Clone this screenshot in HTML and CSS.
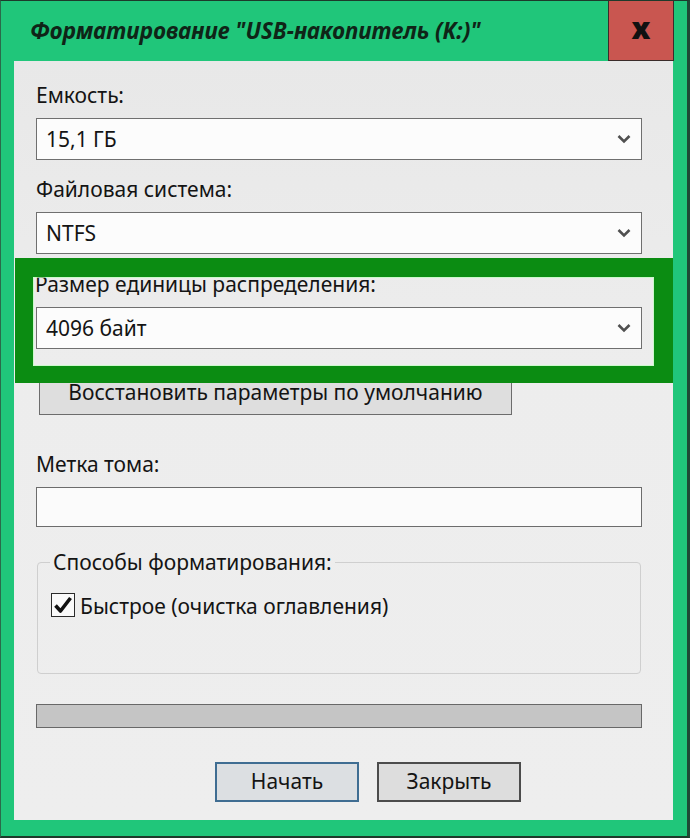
FILE: index.html
```html
<!DOCTYPE html>
<html lang="ru">
<head>
<meta charset="utf-8">
<title>Форматирование</title>
<link rel="stylesheet" href="styles.css">
</head>
<body>
<div class="window">
  <div class="titlebar">
    <div class="title">Форматирование "USB-накопитель (K:)"</div>
    <div class="close">x</div>
  </div>
  <div class="panel">
    <div class="label first">Емкость:</div>
    <div class="combo"><span>15,1 ГБ</span><svg class="chev" width="14" height="10" viewBox="0 0 14 10"><path d="M1.5 2 L7 7.5 L12.5 2" fill="none" stroke="#505050" stroke-width="2.6"/></svg></div>
    <div class="label">Файловая система:</div>
    <div class="combo"><span>NTFS</span><svg class="chev" width="14" height="10" viewBox="0 0 14 10"><path d="M1.5 2 L7 7.5 L12.5 2" fill="none" stroke="#505050" stroke-width="2.6"/></svg></div>
    <div class="label third">Размер единицы распределения:</div>
    <div class="combo"><span>4096 байт</span><svg class="chev" width="14" height="10" viewBox="0 0 14 10"><path d="M1.5 2 L7 7.5 L12.5 2" fill="none" stroke="#505050" stroke-width="2.6"/></svg></div>
    <div class="restore">Восстановить параметры по умолчанию</div>
    <div class="label volume">Метка тома:</div>
    <div class="textbox"></div>
    <fieldset class="group">
      <legend>Способы форматирования:</legend>
      <div class="check-row">
        <span class="checkbox"><svg width="22" height="22" viewBox="0 0 22 22"><path d="M3.5 11.5 L8.5 17 L18.5 4" fill="none" stroke="#111" stroke-width="3.6" stroke-linejoin="round"/></svg></span>
        <span class="check-label">Быстрое (очистка оглавления)</span>
      </div>
    </fieldset>
    <div class="progress"></div>
    <div class="buttons">
      <div class="btn primary">Начать</div>
      <div class="btn">Закрыть</div>
    </div>
  </div>
  <div class="highlight"></div>
</div>
</body>
</html>
```
FILE: styles.css
```css
html, body {
  margin: 0;
  padding: 0;
  background: #22c47a;
}
.window {
  position: relative;
  width: 690px;
  height: 838px;
  box-sizing: border-box;
  background: #20c67a;
  border-top: 1px solid #1d3a2b;
  border-left: 1px solid #2a6a4a;
  border-right: 3px solid #1f4a35;
  border-bottom: 2px solid #1d3a2b;
  font-family: "Noto Sans", "Open Sans", sans-serif;
  color: #141414;
}
.titlebar {
  display: flex;
  height: 60px;
}
.title {
  flex: 1;
  padding: 16px 0 0 29px;
  font-size: 22.4px;
  line-height: 27px;
  font-weight: bold;
  font-style: italic;
  color: #0f2417;
  white-space: nowrap;
}
.close {
  width: 66px;
  height: 60px;
  margin-right: 13px;
  box-sizing: border-box;
  background: #c95650;
  border: 1px solid #3a2c2a;
  border-top: none;
  display: flex;
  justify-content: center;
  align-items: center;
  font-size: 30px;
  font-weight: 900;
  line-height: 1;
  padding-bottom: 6px;
  color: #111;
}
.panel {
  margin-left: 13px;
  width: 659px;
  height: 759px;
  box-sizing: border-box;
  background: linear-gradient(#e8e8e8, #ededed 40%, #eeeeee);
  padding: 21px 0 0 22px;
}
.label {
  font-size: 21px;
  line-height: 26px;
  margin: 16px 0 10px;
  white-space: nowrap;
}
.label.first { margin-top: 0; }
.label.third { margin-top: 17px; margin-left: -1px; }
.label.volume { margin-top: 36px; }
.combo {
  width: 606px;
  height: 42px;
  box-sizing: border-box;
  border: 1px solid #6f6f6f;
  background: #fcfcfc;
  display: flex;
  align-items: center;
  justify-content: space-between;
  padding: 0 9px 0 9px;
  font-size: 21px;
}
.chev { display: block; margin-right: 1px; }
.restore {
  margin: 26px 0 0 3px;
  width: 473px;
  height: 40px;
  box-sizing: border-box;
  border: 1px solid #6c6c6c;
  background: #dedede;
  display: flex;
  align-items: center;
  justify-content: center;
  font-size: 21px;
  padding-bottom: 6px;
}
.textbox {
  width: 606px;
  height: 40px;
  box-sizing: border-box;
  border: 1px solid #6c6c6c;
  background: #fbfbfb;
}
.group {
  margin: 22px 0 0 1px;
  width: 604px;
  box-sizing: border-box;
  border: 1px solid #cfcfcf;
  border-radius: 4px;
  padding: 0 12px 54px 12px;
  min-width: 0;
}
.group legend {
  padding: 0 3px;
  font-size: 21px;
  line-height: 26px;
}
.check-row {
  display: flex;
  align-items: flex-start;
  margin-top: 18px;
  margin-left: 1px;
}
.checkbox {
  width: 24px;
  height: 24px;
  box-sizing: border-box;
  border: 1px solid #2b2b2b;
  background: #fafafa;
  display: flex;
  align-items: center;
  justify-content: center;
}
.checkbox svg { display: block; }
.check-label {
  margin-left: 5px;
  font-size: 21px;
  line-height: 26px;
}
.progress {
  margin-top: 30px;
  width: 606px;
  height: 24px;
  box-sizing: border-box;
  border: 1px solid #686868;
  background: #c5c5c5;
}
.buttons {
  display: flex;
  gap: 18px;
  margin: 34px 0 0 179px;
}
.btn {
  width: 144px;
  height: 40px;
  box-sizing: border-box;
  border: 2px solid #4c4c4c;
  background: #dddddd;
  display: flex;
  align-items: center;
  justify-content: center;
  font-size: 21px;
  padding-bottom: 3px;
}
.btn.primary {
  border-color: #3f6d92;
  background: #dcdfe2;
}
.highlight {
  position: absolute;
  left: 14px;
  top: 257px;
  width: 658px;
  height: 125px;
  box-sizing: border-box;
  border-style: solid;
  border-color: #0b8c12;
  border-width: 19px 19px 17px 18px;
  box-shadow: inset 0 0 0 1px rgba(190, 255, 190, 0.7);
}
```
